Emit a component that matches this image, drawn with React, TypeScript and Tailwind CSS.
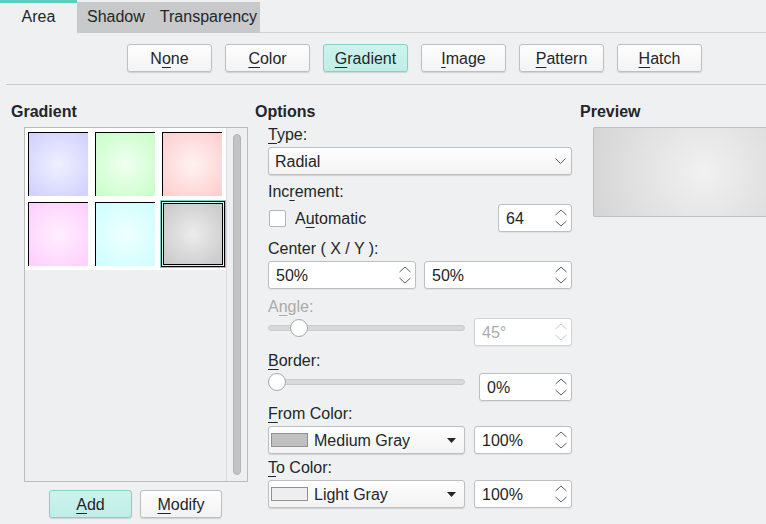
import React from "react";

const U = ({ children }: { children: React.ReactNode }) => (
  <span className="underline decoration-1 underline-offset-[3px]">{children}</span>
);

function Btn({ children, active, w }: { children: React.ReactNode; active?: boolean; w: string }) {
  return (
    <div
      className={`${w} h-[28px] rounded-[3px] border flex items-center justify-center shadow-[0_1px_1px_rgba(0,0,0,0.13)] ${
        active
          ? "bg-linear-to-b from-[#cdf3ed] to-[#bfeee7] border-[#7fd3c8]"
          : "bg-linear-to-b from-[#fefefe] to-[#f3f3f3] border-[#bdbfc0]"
      }`}
    >
      {children}
    </div>
  );
}

function UpDown({ disabled }: { disabled?: boolean }) {
  const c = disabled ? "#c4c6c8" : "#5d6064";
  return (
    <svg width="12" height="18" viewBox="0 0 12 18" className="shrink-0">
      <path d="M0.5 6 L6 1 L11.5 6" fill="none" stroke={c} strokeWidth="1" />
      <path d="M0.5 12 L6 17 L11.5 12" fill="none" stroke={c} strokeWidth="1" />
    </svg>
  );
}

function Spin({ w, value, disabled }: { w: string; value: string; disabled?: boolean }) {
  return (
    <div
      className={`${w} h-[28px] rounded-[3px] border bg-white flex items-center pl-[7px] pr-[4px] shadow-[0_1px_1px_rgba(0,0,0,0.06)] ${
        disabled ? "border-[#d2d3d4] text-[#a9abad]" : "border-[#bdbfc0]"
      }`}
    >
      <span className="flex-1">{value}</span>
      <UpDown disabled={disabled} />
    </div>
  );
}

function Slider({ pos }: { pos: string }) {
  return (
    <div className="relative w-[197px] h-[18px] flex items-center">
      <div className="w-full h-[6px] rounded-full bg-[#d8d9da] border border-[#cacbcc]" />
      <div className={`absolute top-0 ${pos} w-[18px] h-[18px] rounded-full bg-white border border-[#a6a8aa]`} />
    </div>
  );
}

function ColorDrop({ name, swatch }: { name: string; swatch: string }) {
  return (
    <div className="w-[197px] h-[28px] rounded-[3px] border border-[#bdbfc0] bg-linear-to-b from-[#fefefe] to-[#f3f3f3] flex items-center pl-[2px] pr-[8px] shadow-[0_1px_1px_rgba(0,0,0,0.13)]">
      <div className={`w-[37px] h-[14px] border border-[#8f9194] ${swatch}`} />
      <span className="ml-[6px] flex-1">{name}</span>
      <svg width="9" height="5" viewBox="0 0 9 5">
        <path d="M0 0 L9 0 L4.5 5 Z" fill="#232629" />
      </svg>
    </div>
  );
}

function Tile({ g }: { g: string }) {
  return <div className={`mt-[4px] ml-[3px] w-[60px] h-[64px] border-t border-l border-black ${g}`} />;
}

export default function App() {
  return (
    <div className="w-[766px] h-[524px] overflow-hidden bg-[#eff0f1] text-[16px] leading-[19px] text-[#232629] font-['Liberation_Sans',Arial,sans-serif]">
      {/* Tabs */}
      <div className="flex h-[33px]">
        <div className="w-[77px] h-[33px] border-t-[3px] border-[#5bcfbf] flex items-center justify-center pb-[3px]">
          Area
        </div>
        <div className="mt-[2px] h-[31px] bg-[#c8c9ca] flex items-center pb-[2px]">
          <span className="pl-[10px] pr-[7px]">Shadow</span>
          <span className="pl-[8px] pr-[3px]">Transparency</span>
        </div>
        <div className="flex-1 border-b border-[#d0d1d2]" />
      </div>

      {/* type buttons */}
      <div className="pt-[11px] pl-[127px] flex gap-[13px]">
        <Btn w="w-[85px]">
          N<U>o</U>ne
        </Btn>
        <Btn w="w-[85px]">
          <U>C</U>olor
        </Btn>
        <Btn w="w-[85px]" active>
          <U>G</U>radient
        </Btn>
        <Btn w="w-[85px]">
          <U>I</U>mage
        </Btn>
        <Btn w="w-[85px]">
          <U>P</U>attern
        </Btn>
        <Btn w="w-[85px]">
          <U>H</U>atch
        </Btn>
      </div>

      <div className="mt-[12px] ml-[6px] h-px bg-[#c9cacb]" />

      <div className="flex pl-[11px] pt-[17px]">
        {/* Gradient list column */}
        <div className="w-[244px] shrink-0">
          <div className="font-bold h-[19px]">Gradient</div>
          <div className="mt-[6px] ml-[13px] w-[224px] h-[355px] border border-[#babcbd] bg-[#eeeff0] flex">
            <div className="flex-1">
              <div className="bg-white grid grid-cols-3 pb-[2px]">
                <div className="h-[70px]">
                  <Tile g="bg-[radial-gradient(circle,#f0f0ff_0%,#d2d2ff_90%)]" />
                </div>
                <div className="h-[70px]">
                  <Tile g="bg-[radial-gradient(circle,#f0fff0_0%,#ccfecc_90%)]" />
                </div>
                <div className="h-[70px]">
                  <Tile g="bg-[radial-gradient(circle,#fff2f2_0%,#ffd0d0_90%)]" />
                </div>
                <div className="h-[70px]">
                  <Tile g="bg-[radial-gradient(circle,#fff0ff_0%,#fed0fe_90%)]" />
                </div>
                <div className="h-[70px]">
                  <Tile g="bg-[radial-gradient(circle,#f0ffff_0%,#d0fefe_90%)]" />
                </div>
                <div className="h-[70px]">
                  <div className="mt-[2px] ml-[1px] w-[66px] h-[68px] border border-[#6fd5c7]">
                    <div className="w-full h-full border border-black p-px bg-[#d8f4ef]">
                      <div className="w-full h-full border border-black bg-[radial-gradient(circle,#ececec_0%,#cbcbcb_90%)]" />
                    </div>
                  </div>
                </div>
              </div>
            </div>
            <div className="w-[21px] border-l border-[#dadbdc] flex justify-center">
              <div className="mt-[6px] w-[8px] h-[341px] rounded-full bg-[#c3c4c5] border border-[#b3b4b5]" />
            </div>
          </div>
          <div className="mt-[8px] ml-[38px] flex gap-[8px]">
            <Btn w="w-[83px]" active>
              <U>A</U>dd
            </Btn>
            <Btn w="w-[82px]">
              <U>M</U>odify
            </Btn>
          </div>
        </div>

        {/* Options column */}
        <div className="w-[325px] shrink-0">
          <div className="font-bold h-[19px]">Options</div>
          <div className="ml-[13px] w-[304px] flex flex-col">
            <div className="mt-[4px] h-[19px]">
              <U>T</U>ype:
            </div>
            <div className="mt-[3px] h-[28px] rounded-[3px] border border-[#bdbfc0] bg-linear-to-b from-[#fefefe] to-[#f3f3f3] flex items-center pl-[6px] pr-[5px] shadow-[0_1px_1px_rgba(0,0,0,0.13)]">
              <span className="flex-1">Radial</span>
              <svg width="11" height="6" viewBox="0 0 11 6">
                <path d="M0.5 0.5 L5.5 5.5 L10.5 0.5" fill="none" stroke="#5d6064" strokeWidth="1" />
              </svg>
            </div>
            <div className="mt-[7px] h-[19px]">
              Inc<U>r</U>ement:
            </div>
            <div className="mt-[3px] h-[28px] flex items-center">
              <div className="ml-[1px] w-[17px] h-[17px] rounded-[2px] border border-[#b4b6b8] bg-white" />
              <span className="ml-[9px]">
                A<U>u</U>tomatic
              </span>
              <div className="ml-auto">
                <Spin w="w-[74px]" value="64" />
              </div>
            </div>
            <div className="mt-[7px] h-[19px]">Center ( X / Y ):</div>
            <div className="mt-[3px] flex gap-[8px]">
              <Spin w="w-[148px]" value="50%" />
              <Spin w="w-[148px]" value="50%" />
            </div>
            <div className="mt-[8px] h-[19px] text-[#a9abad]">
              A<U>n</U>gle:
            </div>
            <div className="mt-[2px] flex items-start">
              <div className="mt-[1px]">
                <Slider pos="left-[22px]" />
              </div>
              <div className="ml-auto">
                <Spin w="w-[98px]" value="45°" disabled />
              </div>
            </div>
            <div className="mt-[5px] h-[19px]">
              <U>B</U>order:
            </div>
            <div className="mt-[3px] flex items-start">
              <Slider pos="left-0" />
              <div className="ml-auto">
                <Spin w="w-[93px]" value="0%" />
              </div>
            </div>
            <div className="mt-[3px] h-[19px]">
              <U>F</U>rom Color:
            </div>
            <div className="mt-[3px] flex">
              <ColorDrop name="Medium Gray" swatch="bg-[#c0c0c0]" />
              <div className="ml-auto">
                <Spin w="w-[98px]" value="100%" />
              </div>
            </div>
            <div className="mt-[4px] h-[19px]">
              <U>T</U>o Color:
            </div>
            <div className="mt-[3px] flex">
              <ColorDrop name="Light Gray" swatch="bg-[#eeeeee]" />
              <div className="ml-auto">
                <Spin w="w-[98px]" value="100%" />
              </div>
            </div>
          </div>
        </div>

        {/* Preview column */}
        <div className="flex-1">
          <div className="font-bold h-[19px]">Preview</div>
          <div className="mt-[6px] ml-[13px] w-[220px] h-[90px] rounded-[2px] border border-[#bcbebf] bg-[radial-gradient(circle_at_50%_50%,#f1f1f1_0%,#d6d6d6_95%)]" />
        </div>
      </div>
    </div>
  );
}
